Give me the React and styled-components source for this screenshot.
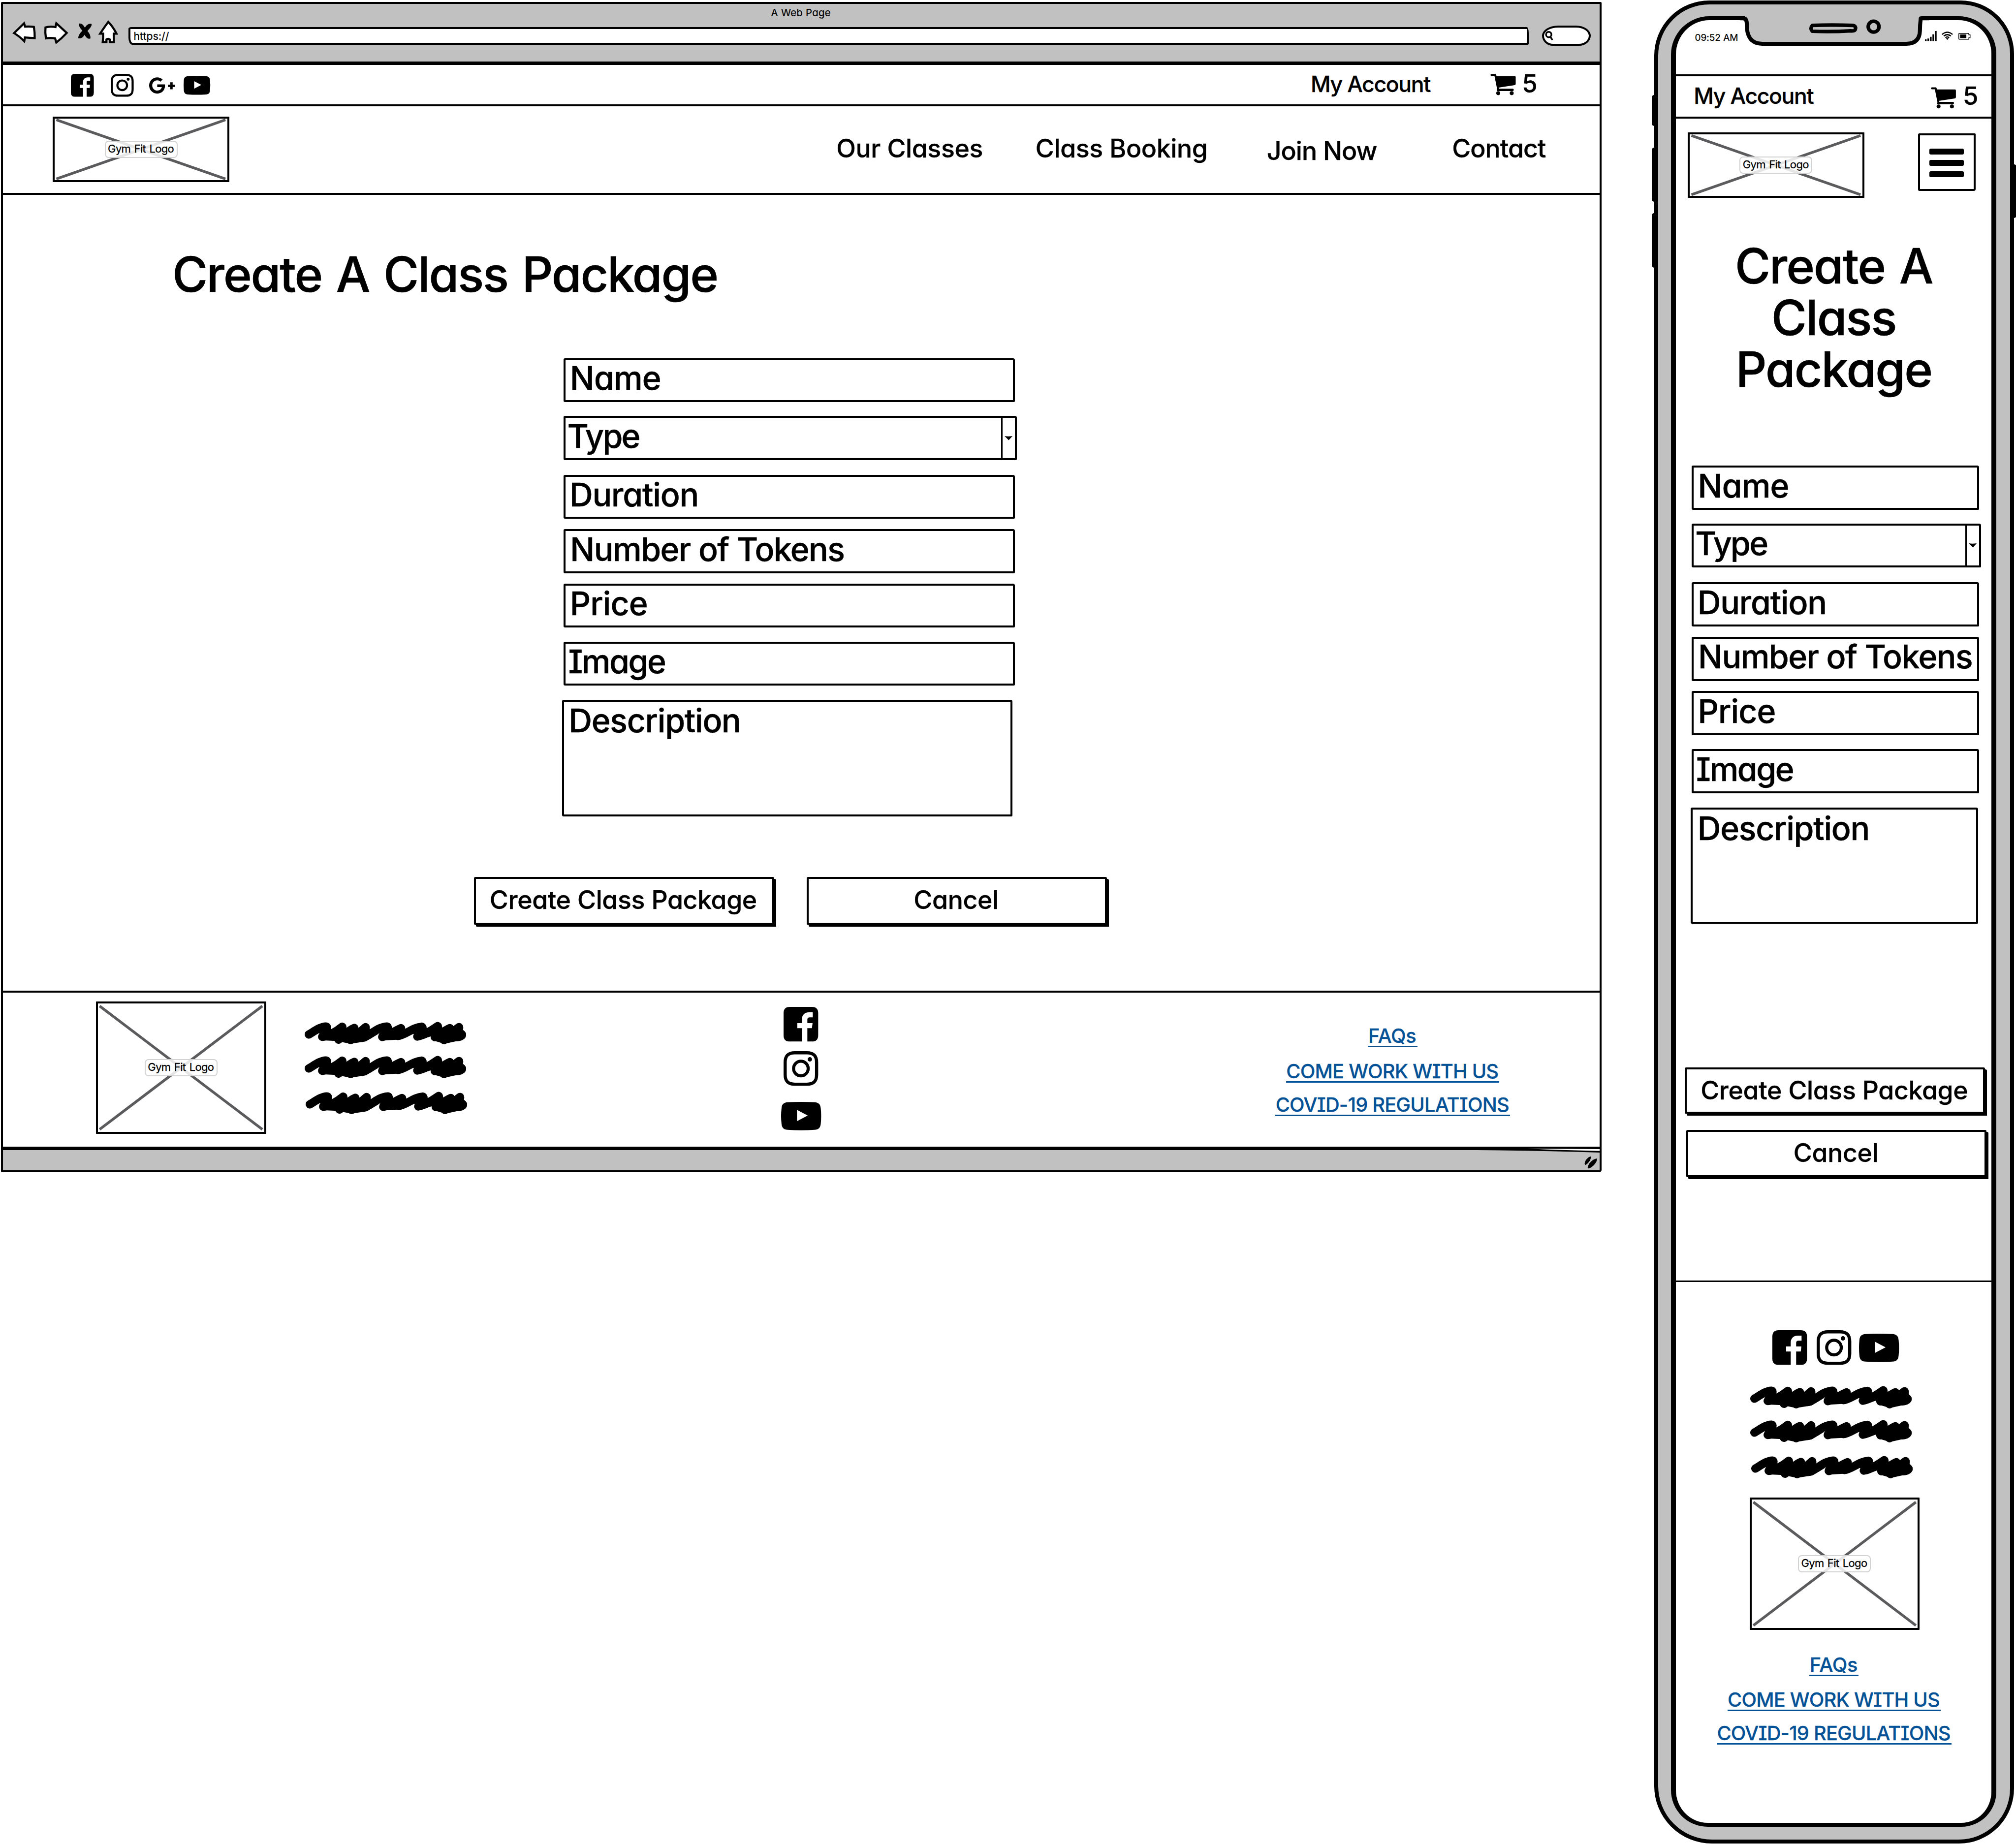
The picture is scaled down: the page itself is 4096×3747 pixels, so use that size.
import React from "react";
import styled, { createGlobalStyle } from "styled-components";

const SCALE = 4096 / 4832;
const u = (n) => `${+(n * SCALE).toFixed(2)}px`;
const line = (n) => `${Math.max(1, Math.round(n * SCALE))}px`;

const INK = "#000";
const METAL = "#c1c1c1";
const LINK = "#055297";

const GlobalStyle = createGlobalStyle`
  *, *::before, *::after { box-sizing: border-box; flex-shrink: 0; }
  html, body { margin: 0; padding: 0; background: #fff; }
  body { overflow: hidden; }
`;

/* ---------- shared pieces ---------- */

const Page = styled.div`
  width: 4096px;
  height: 3747px;
  display: flex;
  align-items: flex-start;
  overflow: hidden;
  color: ${INK};
  font-family: Inter, "Liberation Sans", sans-serif;
  font-weight: 500;
  font-feature-settings: "cv11" 1, "cv08" 1;
  stroke-linejoin: round;
`;

const Text = styled.span`
  display: flex;
  justify-content: center;
  white-space: nowrap;
  width: ${(p) => u(p.$w)};
  margin-left: ${(p) => u(p.$ml || 0)};
  margin-top: ${(p) => u(p.$mt || 0)};
  padding-right: 0.05em;
  font-size: ${(p) => u(p.$size)};
  line-height: ${(p) => u(p.$lh || p.$size)};
  letter-spacing: ${(p) => p.$ls || 0}em;
  word-spacing: ${(p) => p.$ws || 0}em;
  font-weight: ${(p) => (p.$thin ? 400 : 500)};
  -webkit-text-stroke: ${(p) => (p.$thin ? 0.012 : 0.007)}em currentColor;
`;

const Icon = styled.svg`
  display: block;
  width: ${(p) => u(p.$w)};
  height: ${(p) => u(p.$h)};
  margin-left: ${(p) => u(p.$ml || 0)};
  margin-top: ${(p) => u(p.$mt || 0)};
  overflow: visible;
  stroke-linejoin: miter;
`;

const Facebook = (p) => (
  <Icon viewBox="0 0 83 83" {...p}>
    <path d="M15 0H68Q83 0 83 15V68Q83 83 68 83H57V51H68L69.500 39H57V30Q57 25 63 25H70V13H61C50 13 44 20 44 30V39H33V51H44V83H15Q0 83 0 68V15Q0 0 15 0Z" />
  </Icon>
);

const Instagram = (p) => (
  <Icon viewBox="0 0 83 83" fill="none" stroke={INK} {...p}>
    <path
      strokeWidth="7.6"
      d="M27 3.800H56C72 3.800 79.200 11 79.200 27V56C79.200 72 72 79.200 56 79.200H27C11 79.200 3.800 72 3.800 56V27C3.800 11 11 3.800 27 3.800Z"
    />
    <circle cx="41.500" cy="41.500" r="17.500" strokeWidth="7.400" />
    <circle cx="63" cy="19.500" r="5.200" fill={INK} stroke="none" />
  </Icon>
);

const GooglePlus = (p) => (
  <Icon viewBox="12.8 64 614.4 384" {...p}>
    <path d="M386.061 228.496c1.834 9.692 3.143 19.384 3.143 31.956C389.204 370.205 315.599 448 204.8 448c-106.084 0-192-85.915-192-192s85.916-192 192-192c51.864 0 95.083 18.859 128.611 50.292l-52.126 50.03c-14.145-13.621-39.028-29.599-76.485-29.599-65.484 0-118.92 54.221-118.92 121.277 0 67.056 53.436 121.277 118.92 121.277 75.961 0 104.513-54.745 108.965-82.773H204.8v-66.009h181.261zm185.406 6.437V179.2h-56.001v55.733h-55.733v56.001h55.733v55.733h56.001v-55.733H627.2v-56.001h-55.733z" />
  </Icon>
);

const YouTube = (p) => (
  <Icon viewBox="0 0 96 68" {...p}>
    <path
      fillRule="evenodd"
      d="M16 1Q48 -1 80 1C90 1.500 94 6 95 15Q97 34 95 53C94 62 90 66.500 80 67Q48 69 16 67C6 66.500 2 62 1 53Q-1 34 1 15C2 6 6 1.500 16 1ZM38 19.300V46.300L63.800 32.800Z"
    />
  </Icon>
);

const Cart = (p) => (
  <Icon viewBox="0 0 60 50" {...p}>
    <path
      d="M2.500 2.700H11.500L18.500 37.500H53"
      fill="none"
      stroke={INK}
      strokeWidth="4.600"
      strokeLinecap="round"
      strokeLinejoin="round"
    />
    <path d="M12 5.500H58Q60 5.500 60 8V24Q60 26.500 57.500 27L17 33Z" />
    <path d="M17 38.500H53" stroke={INK} strokeWidth="4.500" strokeLinecap="round" />
    <circle cx="18.500" cy="46" r="4.700" />
    <circle cx="50.500" cy="46" r="4.700" />
  </Icon>
);

const Scribble = (p) => (
  <Icon viewBox="0 0 387 53" {...p}>
    <path
      d="M10 29.500C20 24 38 10 51 10.500C59 11 44 30 42 35C54 35 74 24 90 11C92 18 80 34 81 42C92 34 104 20 119 14C118 22 108 36 110 43C122 34 134 22 146 12C148 20 138 32 138 37.500C156 34 172 12 197 10.500C205 13 188 28 186 35.500C200 32 214 22 231 14.500C228 22 220 28 223 33C240 32 258 13 280 11C288 13 274 26 270 34.500C286 32 304 20 319 9.500C322 18 310 30 312 36C322 30 336 20 348 14.500C346 24 334 34 334 43C346 34 358 20 370 12C372 20 362 30 364 36L377 30"
      fill="none"
      stroke={INK}
      strokeWidth="20"
      strokeLinecap="round"
      strokeLinejoin="round"
    />
    <path d="M62 21L99 17L130 14L156 18L177 28L147 46L110 52L76 45L50 44Z" />
    <path d="M177 28L207 18L240 16L260 27L225 42L190 44Z" />
    <path d="M260 27L288 21L322 14L362 13L380 19Q390 26 386 36Q380 46 362 46L335 52L308 44L303 34L274 43Z" />
  </Icon>
);

/* ---------- image placeholder ---------- */

const Placeholder = styled.div`
  display: grid;
  place-items: center;
  width: ${(p) => u(p.$w)};
  height: ${(p) => u(p.$h)};
  margin-left: ${(p) => u(p.$ml)};
  margin-top: ${(p) => u(p.$mt)};
  border: ${line(5.2)} solid ${INK};
  border-radius: 1px;
  & > * { grid-area: 1 / 1; }
`;

const Cross = styled.svg`
  width: 100%;
  height: 100%;
  stroke: #5b5b5d;
  stroke-width: ${u(6.4)};
`;

const Caption = styled.div`
  display: flex;
  justify-content: center;
  z-index: 1;
  width: ${u(175)};
  height: ${u(41.5)};
  padding-top: ${u(3.5)};
  border: 2px solid #d2d2d2;
  border-radius: ${u(9)};
  background: rgba(255, 255, 255, 0.85);
`;

const Logo = (p) => (
  <Placeholder {...p}>
    <Cross>
      <line x1="1%" y1="2%" x2="99%" y2="98%" />
      <line x1="1%" y1="98%" x2="99%" y2="2%" />
    </Cross>
    <Caption>
      <Text $w={153} $size={26} $lh={28} $ls={-0.03} $ws={0.08} $thin>Gym Fit Logo</Text>
    </Caption>
  </Placeholder>
);

/* ---------- form ---------- */

const Form = styled.div`
  display: flex;
  flex-direction: column;
  margin-left: ${(p) => u(p.$ml)};
  margin-top: ${(p) => u(p.$mt)};
`;

const Field = styled.div`
  display: flex;
  align-items: flex-start;
  width: ${(p) => u(p.$w)};
  height: ${(p) => u(p.$h || 105.6)};
  margin-top: ${(p) => u(p.$mt || 0)};
  margin-left: ${(p) => u(p.$ml || 0)};
  padding-top: ${(p) => u(p.$pt || 4)};
  border: ${line(4.6)} solid ${INK};
  border-radius: 3px 4px 2px 3px;
`;

const SelectField = styled(Field)`
  justify-content: space-between;
  padding-top: 0;
  & > span { padding-top: ${u(4)}; }
`;

const SelectArrow = styled.div`
  display: flex;
  align-items: center;
  justify-content: center;
  width: ${u(33)};
  height: 100%;
  border-left: ${line(3.6)} solid ${INK};
`;

const PackageForm = ({ width, areaWidth, areaShift, ...p }) => (
  <Form {...p}>
    <Field $w={width}><Text $size={78} $ml={16.5} $w={210} $ls={-0.013}>Name</Text></Field>
    <SelectField $w={width + 4.5} $mt={32.8}>
      <Text $size={78} $ml={8.5} $w={168} $ls={-0.04}>Type</Text>
      <SelectArrow>
        <Icon $w={19} $h={10} viewBox="0 0 19 10"><path d="M0 0Q9 1.500 19 0L10 10Z" /></Icon>
      </SelectArrow>
    </SelectField>
    <Field $w={width} $mt={35.5}><Text $size={78} $ml={16.5} $w={299} $ls={-0.018}>Duration</Text></Field>
    <Field $w={width} $mt={24.9}><Text $size={78} $ml={16.5} $w={650} $ls={-0.0232}>Number of Tokens</Text></Field>
    <Field $w={width} $mt={24.4}><Text $size={78} $ml={16.5} $w={178} $ls={-0.0142}>Price</Text></Field>
    <Field $w={width} $mt={33.8}><Text $size={78} $ml={11.5} $w={226} $ls={-0.0374}>Image</Text></Field>
    <Field $w={areaWidth} $mt={34.4} $ml={areaShift} $h={278.6} $pt={5.6}>
      <Text $size={78} $ml={18} $w={402} $ls={-0.019}>Description</Text>
    </Field>
  </Form>
);

const Button = styled.div`
  display: flex;
  justify-content: center;
  width: ${u(719.5)};
  height: ${(p) => u(p.$h)};
  margin-left: ${(p) => u(p.$ml || 0)};
  margin-top: ${(p) => u(p.$mt || 0)};
  padding-top: ${u(20)};
  border: ${line(4.6)} solid ${INK};
  border-radius: 3px 3px 0 2px;
  box-shadow: ${line(4.5)} ${line(5)} 0 ${INK};
`;

/* ---------- footer links ---------- */

const Links = styled.div`
  display: flex;
  flex-direction: column;
  align-items: center;
  width: ${u(563)};
  margin-left: ${(p) => u(p.$ml)};
  margin-top: ${(p) => u(p.$mt)};
`;

const Link = styled.div`
  display: flex;
  justify-content: center;
  width: ${(p) => u(p.$w)};
  margin-top: ${(p) => u(p.$mt || 0)};
  border-bottom: 3px solid ${LINK};
  color: ${LINK};
`;

const FooterLinks = (p) => (
  <Links {...p}>
    <Link $w={118}><Text $size={47} $w={110} $ls={-0.0084}>FAQs</Text></Link>
    <Link $w={511} $mt={34}><Text $size={47} $w={505} $ls={-0.0193}>COME WORK WITH US</Text></Link>
    <Link $w={563} $mt={29.8}><Text $size={47} $w={556} $ls={-0.0208}>COVID-19 REGULATIONS</Text></Link>
  </Links>
);

const Stack = styled.div`
  display: flex;
  flex-direction: column;
  align-items: ${(p) => p.$align || "flex-start"};
  margin-left: ${(p) => u(p.$ml || 0)};
  margin-top: ${(p) => u(p.$mt || 0)};
`;

const Row = styled.div`
  display: flex;
  align-items: ${(p) => p.$align || "flex-start"};
  height: ${(p) => (p.$h ? u(p.$h) : "auto")};
  margin-left: ${(p) => u(p.$ml || 0)};
  margin-top: ${(p) => u(p.$mt || 0)};
`;

const Address = (p) => (
  <Stack {...p}>
    <Scribble $w={387} $h={53} />
    <Scribble $w={387} $h={53} $mt={28.5} />
    <Scribble $w={387} $h={53} $mt={33} $ml={2} />
  </Stack>
);

/* ---------- desktop browser ---------- */

const Browser = styled.div`
  display: flex;
  flex-direction: column;
  width: ${u(3836.5)};
  height: ${u(2805.5)};
  margin: ${u(5)} 0 0 ${u(2)};
  border: ${line(5)} solid ${INK};
  border-radius: 2px 2px 5px 2px;
`;

const Chrome = styled.div`
  height: ${u(145.5)};
  background: ${METAL};
  border-bottom: ${line(8.5)} solid ${INK};
`;

const ChromeTitle = styled.div`
  display: flex;
  justify-content: center;
  height: ${u(41)};
  padding-top: ${u(7.5)};
`;

const AddressBar = styled.div`
  width: ${u(3357)};
  height: ${u(43)};
  margin-left: ${u(25.5)};
  margin-top: ${u(14)};
  padding: ${u(5)} 0 0 ${u(9)};
  border: ${line(4.8)} solid ${INK};
  border-radius: 6px 4px 3px 8px / 3px 12px 3px 14px;
  background: #fff;
`;

const SearchBox = styled.div`
  display: flex;
  align-items: center;
  width: ${u(117)};
  height: ${u(49)};
  margin-left: ${u(31)};
  margin-top: ${u(10.5)};
  padding-left: ${u(3)};
  border: ${line(4.5)} solid ${INK};
  border-radius: ${u(42)} ${u(38)} ${u(30)} ${u(28)} / ${u(26)};
  background: #fff;
`;

const TopBar = styled.div`
  display: flex;
  align-items: center;
  height: ${u(100)};
  padding-left: ${u(163)};
  padding-top: ${u(3)};
  border-bottom: ${line(5)} solid ${INK};
`;

const NavBar = styled.div`
  display: flex;
  align-items: flex-start;
  height: ${u(211.5)};
  border-bottom: ${line(5)} solid ${INK};
`;

const Main = styled.div`
  display: flex;
  flex-direction: column;
  height: ${u(1907.5)};
`;

const Footer = styled.div`
  display: flex;
  align-items: flex-start;
  height: ${u(383)};
  border-top: ${line(5)} solid ${INK};
  border-bottom: ${line(8)} solid ${INK};
`;

const StatusBar = styled.div`
  display: flex;
  flex: 1;
  justify-content: flex-end;
  background: ${METAL};
`;

const DesktopMock = () => (
  <Browser>
    <Chrome>
      <ChromeTitle><Text $w={141} $size={24} $lh={27} $ls={0.014} $thin>A Web Page</Text></ChromeTitle>
      <Row>
        <Icon $w={56} $h={52} $ml={24} $mt={1} viewBox="0 0 56 52" fill="#fff" stroke={INK} strokeWidth="5">
          <path d="M3 27.500L27 4L29.500 12Q40 11 50.500 12.500Q53 26 52.500 39.500Q40 39 29 38L27.500 47Q17 36 3 27.500Z" />
        </Icon>
        <Icon $w={58} $h={53} $ml={18} $mt={1} viewBox="0 0 58 53" fill="#fff" stroke={INK} strokeWidth="5">
          <path d="M4 14Q14 10.500 28 13L30 4Q42 15 55 27Q43 40 30 50L27 40Q16 38 5 40Q3 26 4 14Z" />
        </Icon>
        <Icon $w={33} $h={38} $ml={24.5} $mt={5} viewBox="0 0 33 38">
          <path d="M2 1C8 0 12 4 16 11C20 4 26 0 32 2C33 8 26 14 22 19C27 25 30 30 29 37C22 39 19 34 15 28C12 34 6 38 0 36C0 29 5 23 10 18C4 12 1 7 2 1Z" />
        </Icon>
        <Icon $w={45} $h={55} $ml={17} $mt={-1} viewBox="0 0 45 55" fill="#fff" stroke={INK} strokeWidth="5">
          <path d="M22.500 3Q14 14 3 31H10V40L9 51.500H18V45Q22 42 26 45V51.500H36L35.500 40V31H42Q34 15 22.500 3Z" />
        </Icon>
        <AddressBar><Text $w={84} $size={25} $lh={25} $ls={0.003} $thin>https://</Text></AddressBar>
        <SearchBox>
          <Icon $w={20} $h={23} viewBox="0 0 20 23" fill="none" stroke={INK} strokeWidth="4" strokeLinecap="round">
            <ellipse cx="9" cy="8.500" rx="6.500" ry="6.500" />
            <path d="M13 14L17 20" />
          </Icon>
        </SearchBox>
      </Row>
    </Chrome>
    <TopBar>
      <Facebook $w={55} $h={55} />
      <Instagram $w={55} $h={55} $ml={41} />
      <GooglePlus $w={62} $h={39.5} $ml={37} $mt={2} />
      <YouTube $w={64} $h={45.5} $ml={20} />
      <Text $w={283} $size={52.5} $ml={2641} $mt={-4.5} $ls={-0.03}>My Account</Text>
      <Cart $w={61} $h={50.5} $ml={144.5} $mt={-4} />
      <Text $w={30} $size={60} $ml={20} $mt={-6.5}>5</Text>
    </TopBar>
    <NavBar>
      <Logo $w={423} $h={157} $ml={120} $mt={24.8} />
      <Text $w={347} $size={61} $ml={1458.5} $mt={70} $ls={-0.0062}>Our Classes</Text>
      <Text $w={407} $size={61} $ml={131} $mt={70} $ls={-0.0062}>Class Booking</Text>
      <Text $w={261} $size={61} $ml={146} $mt={76} $ls={-0.0185}>Join Now</Text>
      <Text $w={222} $size={61} $ml={183} $mt={70} $ls={-0.018}>Contact</Text>
    </NavBar>
    <Main>
      <Text $w={1299} $size={116} $lh={124} $ml={413} $mt={129} $ls={-0.0215} $ws={0.045}>Create A Class Package</Text>
      <PackageForm width={1081.5} areaWidth={1079.5} areaShift={-3.5} $ml={1344} $mt={139} />
      <Row $ml={1129} $mt={145.5}>
        <Button $h={114.5}><Text $w={637} $size={61} $ls={-0.0064}>Create Class Package</Text></Button>
        <Button $h={114.5} $ml={78.3}><Text $w={198} $size={61} $ls={-0.0053}>Cancel</Text></Button>
      </Row>
    </Main>
    <Footer>
      <Logo $w={407.5} $h={317.5} $ml={223.6} $mt={22} />
      <Address $ml={93} $mt={71} />
      <Stack $align="center" $ml={752} $mt={35}>
        <Facebook $w={83} $h={83} />
        <Instagram $w={83} $h={83} $mt={23} />
        <YouTube $w={96} $h={68} $mt={38.5} />
      </Stack>
      <FooterLinks $ml={1089} $mt={81} />
    </Footer>
    <StatusBar>
      <Icon $w={294} $h={47} viewBox="0 0 294 47">
        <path d="M0 0H294V6Q150 1 0 0Z" />
        <path d="M120 -3.500Q210 -3 294 -2.500V2Q200 0 120 -3.500Z" fill="#fff" />
        <path d="M258 33C258 26 264 18 272 15C275 20 268 32 259 36ZM265 43C266 33 276 22 287 20C290 26 278 42 267 44Z" />
      </Icon>
    </StatusBar>
  </Browser>
);

/* ---------- phone ---------- */

const Phone = styled.div`
  position: relative;
  width: ${u(862)};
  height: ${u(4418)};
  margin: ${u(1)} 0 0 ${u(127)};
  padding: ${u(29)} 0 0 ${u(30.5)};
  border: ${line(10)} solid ${INK};
  border-radius: ${u(132)} ${u(128)} ${u(132)} ${u(138)};
  background: ${METAL};
`;

const SideKey = styled.div`
  position: absolute;
  top: ${(p) => u(p.$top)};
  ${(p) => p.$side}: ${(p) => u(p.$out)};
  width: ${u(12)};
  height: ${(p) => u(p.$h)};
  border-radius: 5px;
  background: ${INK};
`;

const Screen = styled.div`
  position: relative;
  display: flex;
  flex-direction: column;
  width: ${u(779.5)};
  height: ${u(4339)};
  border: solid ${INK};
  border-width: ${line(9.5)} ${line(12)};
  border-radius: ${u(92)} ${u(90)} ${u(84)} ${u(88)};
  background: #fff;
`;

const Notch = styled.svg`
  position: absolute;
  left: ${u(157)};
  top: ${u(-10)};
  width: ${u(440)};
  height: ${u(75)};
  overflow: visible;
`;

const PhoneStatus = styled.div`
  display: flex;
  align-items: flex-start;
  height: ${u(129.3)};
`;

const PhoneAccount = styled.div`
  display: flex;
  align-items: flex-start;
  height: ${u(106)};
  border: solid ${INK};
  border-width: ${line(4.5)} 0;
`;

const MenuButton = styled.div`
  display: flex;
  flex-direction: column;
  align-items: center;
  gap: ${u(13.2)};
  width: ${u(138)};
  height: ${u(138)};
  margin-left: ${u(129)};
  margin-top: ${u(35.5)};
  padding-top: ${u(31.5)};
  border: ${line(4.6)} solid ${INK};
  border-radius: 3px 2px 4px 3px;
`;

const MenuBar = styled.div`
  width: ${u(82.5)};
  height: ${u(14)};
  border-radius: ${u(3.5)};
  background: ${INK};
`;

const PhoneTitle = styled.h1`
  width: ${u(600)};
  margin: ${u(100.5)} 0 0 ${u(78)};
  font-size: ${u(116)};
  line-height: ${u(124)};
  font-weight: 500;
  letter-spacing: -0.02em;
  word-spacing: 0.045em;
  text-align: center;
  -webkit-text-stroke: 0.007em currentColor;
`;

const PhoneFooter = styled.div`
  margin-top: ${u(248)};
  padding-top: ${u(116)};
  border-top: ${line(3.4)} solid ${INK};
`;

const PhoneMock = () => (
  <Phone>
    <SideKey $side="left" $out={-15.5} $top={217} $h={74} />
    <SideKey $side="left" $out={-15.5} $top={344} $h={129} />
    <SideKey $side="left" $out={-15.5} $top={500} $h={131} />
    <SideKey $side="right" $out={-15} $top={384} $h={128} />
    <Screen>
      <Notch viewBox="0 0 440 75">
        <path d="M9 -1H431L428 40Q420 66 395 66H50Q18 66 13 30Z" fill={METAL} />
        <path
          d="M-3 5H4Q13 5 13 18Q12 66 50 66H395Q427 66 428 35Q428 20 430 5H450"
          fill="none"
          stroke={INK}
          strokeWidth="9.500"
        />
        <path d="M170 22Q215 20 268 22Q276 24 273 32Q272 36 262 35Q215 38 170 36Q164 30 170 22Z" fill="none" stroke={INK} strokeWidth="8.500" />
        <ellipse cx="317" cy="25" rx="13" ry="13" fill="none" stroke={INK} strokeWidth="8.500" />
      </Notch>
      <PhoneStatus>
        <Text $w={101} $size={22.5} $ml={47} $mt={30.5} $ls={-0.001} $thin>09:52 AM</Text>
        <Icon $w={28} $h={24} $ml={448} $mt={26} viewBox="0 0 28 24">
          <path d="M0 20H4V24H0ZM6 18H10V24H6ZM12 14H16V24H12ZM18 8H22V24H18ZM24 0H28V24H24Z" />
        </Icon>
        <Icon $w={27} $h={20} $ml={12.5} $mt={27} viewBox="0 0 27 20" fill="none" stroke={INK} strokeWidth="3">
          <path d="M1 7Q13.500 -3.500 26 7M5 11Q13.500 4 22 11M9 15Q13.500 11 18 15" />
          <path d="M10.500 17Q13.500 14.500 16.500 17L13.500 20Z" fill={INK} stroke="none" />
        </Icon>
        <Icon $w={29} $h={16} $ml={13} $mt={30} viewBox="0 0 29 16">
          <path d="M2 1H25V4.500H28V11.500H25V15H2Q1 15 1 14V2Q1 1 2 1Z" fill="none" stroke={INK} strokeWidth="1.800" />
          <path d="M4 3.500H19V12.500H4Z" />
        </Icon>
      </PhoneStatus>
      <PhoneAccount>
        <Text $w={284} $size={52.5} $ml={45} $mt={21} $ls={-0.03}>My Account</Text>
        <Cart $w={60} $h={50.5} $ml={282} $mt={25.5} />
        <Text $w={30} $size={60} $ml={21.5} $mt={17.5}>5</Text>
      </PhoneAccount>
      <Row $h={190.9}>
        <Logo $w={423} $h={157} $ml={28} $mt={33.6} />
        <MenuButton><MenuBar /><MenuBar /><MenuBar /></MenuButton>
      </Row>
      <PhoneTitle>Create A Class Package</PhoneTitle>
      <PackageForm width={689} areaWidth={688.4} areaShift={-1.5} $ml={37} $mt={169} />
      <Stack $ml={21} $mt={344}>
        <Button $h={111.5}><Text $w={637} $size={61} $ls={-0.0064}>Create Class Package</Text></Button>
        <Button $h={112.5} $mt={39} $ml={4}><Text $w={198} $size={61} $ls={-0.0053}>Cancel</Text></Button>
      </Stack>
      <PhoneFooter>
        <Row $align="center" $ml={230.5}>
          <Facebook $w={83} $h={83} />
          <Instagram $w={83} $h={83} $ml={23} />
          <YouTube $w={96} $h={68} $ml={19.5} />
        </Row>
        <Address $ml={178} $mt={51} />
        <Logo $w={407} $h={317.5} $ml={176} $mt={46.5} />
        <FooterLinks $ml={97.4} $mt={59.5} />
      </PhoneFooter>
    </Screen>
  </Phone>
);

export default function App() {
  return (
    <>
      <GlobalStyle />
      <Page>
        <DesktopMock />
        <PhoneMock />
      </Page>
    </>
  );
}
